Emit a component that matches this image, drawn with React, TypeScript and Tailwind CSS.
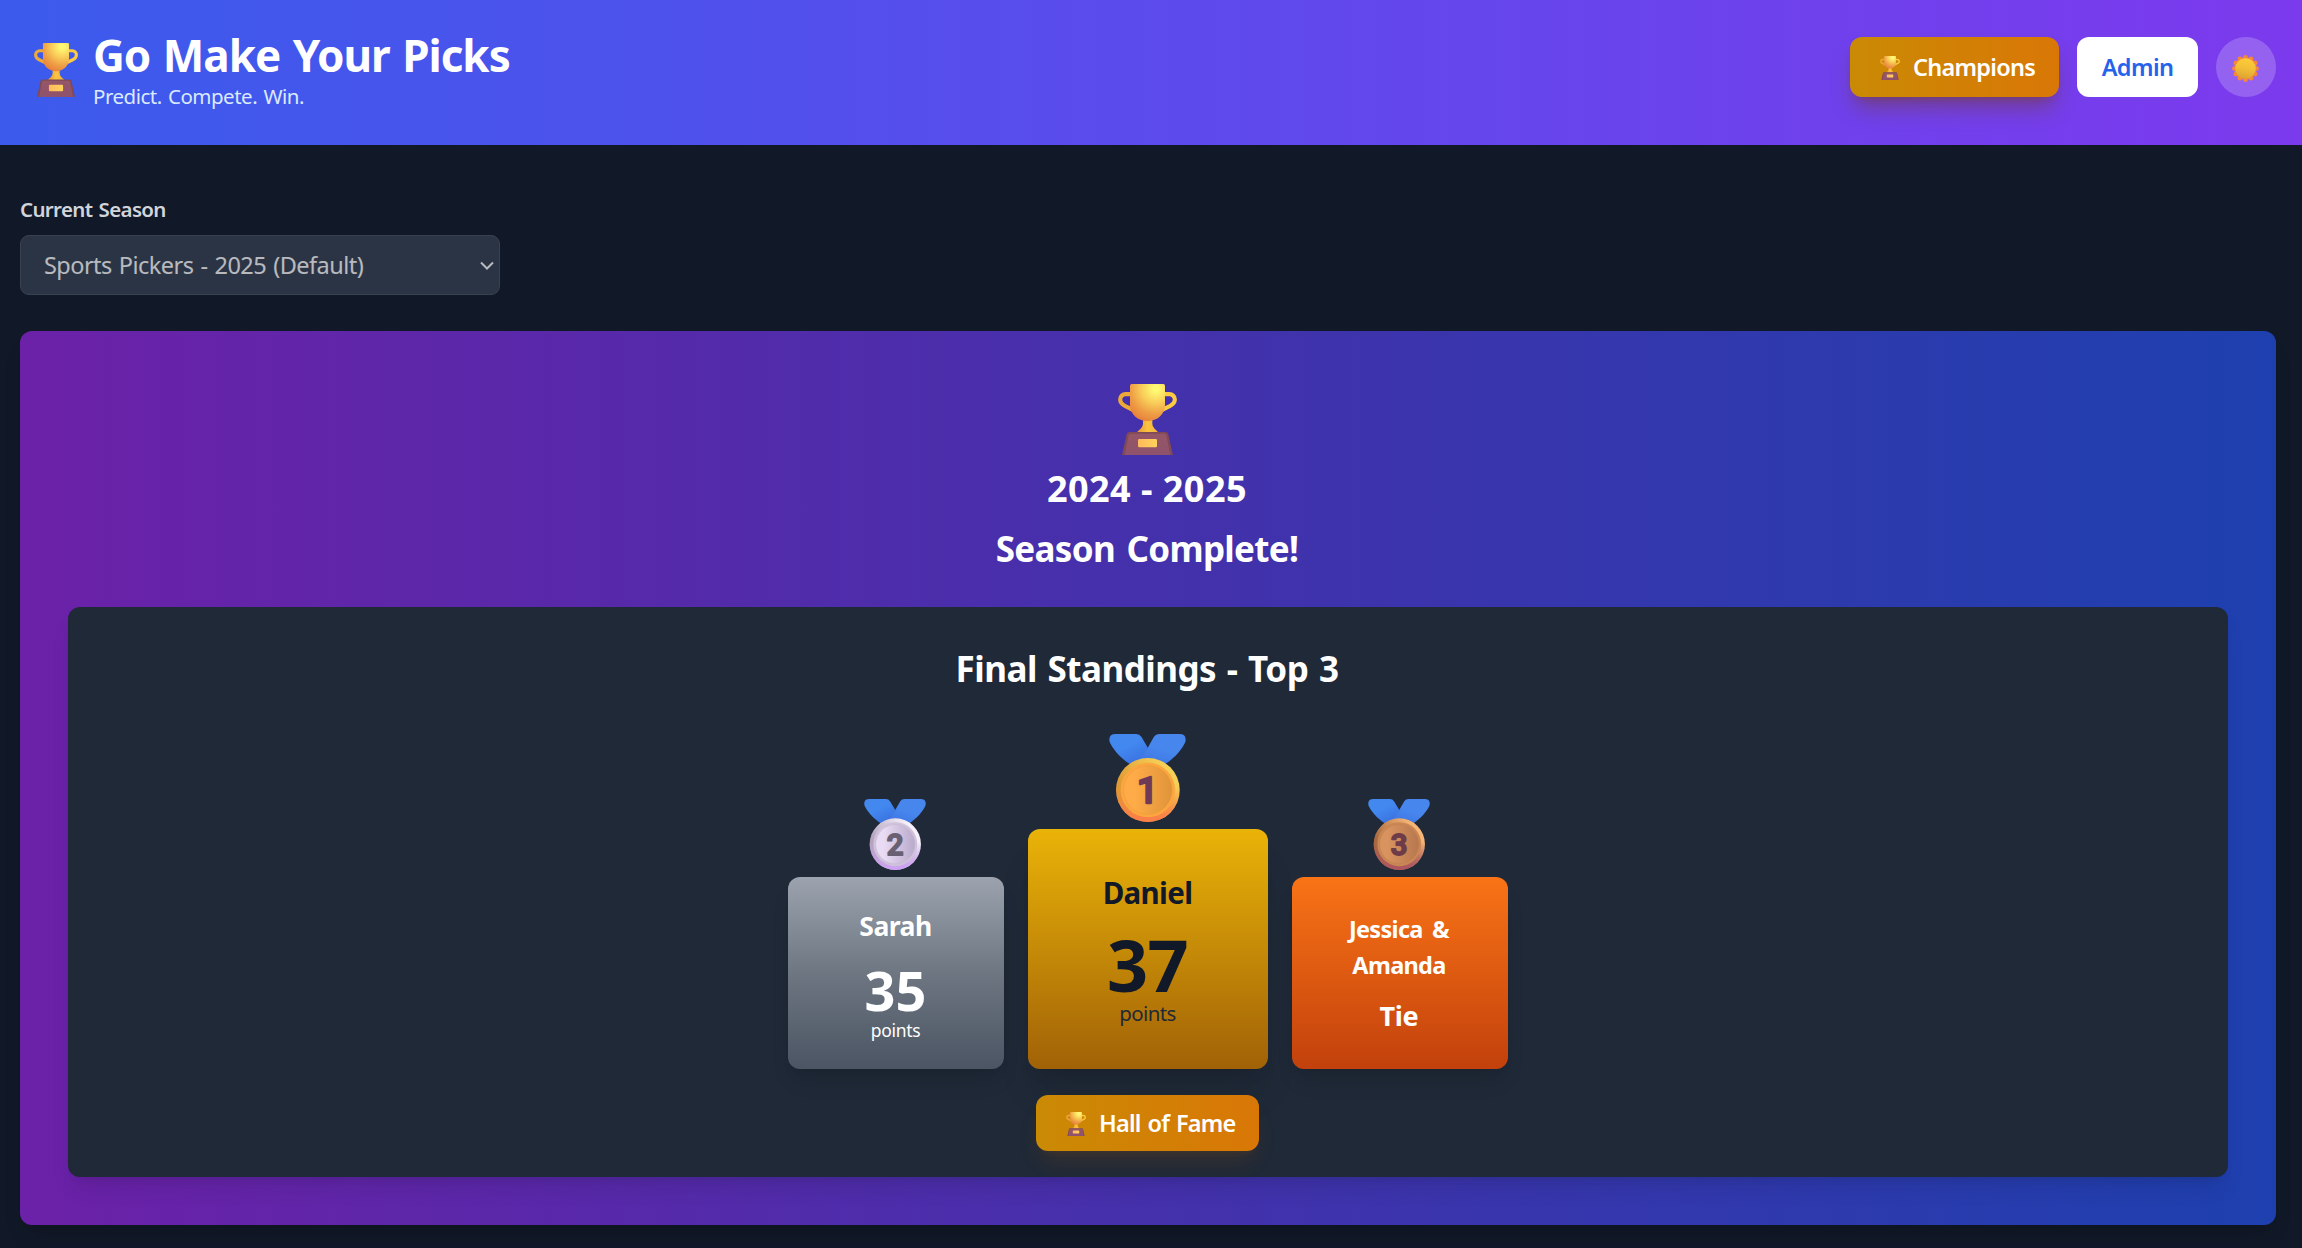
import React, { useId } from "react";

function Trophy({ className }: { className: string }) {
  const id = useId();
  return (
    <svg viewBox="0 0 177 213" preserveAspectRatio="none" className={className} aria-hidden="true">
      <defs>
        <radialGradient id={id + "cup"} gradientUnits="userSpaceOnUse" cx="114" cy="14" r="112">
          <stop offset="0.08" stopColor="#fff873" />
          <stop offset="0.4" stopColor="#f8cb58" />
          <stop offset="0.68" stopColor="#ee9e45" />
          <stop offset="0.9" stopColor="#e8843c" />
          <stop offset="1" stopColor="#dd7350" />
        </radialGradient>
        <linearGradient id={id + "stem"} x1="0" y1="0" x2="1" y2="0">
          <stop offset="0" stopColor="#e59334" />
          <stop offset="0.5" stopColor="#fbc440" />
          <stop offset="1" stopColor="#f0b03c" />
        </linearGradient>
        <linearGradient id={id + "plate"} x1="0" y1="0" x2="1" y2="0">
          <stop offset="0" stopColor="#ffb95c" />
          <stop offset="1" stopColor="#ffd35c" />
        </linearGradient>
        <linearGradient id={id + "base"} x1="0" y1="0" x2="0" y2="1">
          <stop offset="0" stopColor="#955667" />
          <stop offset="1" stopColor="#8f526c" />
        </linearGradient>
      </defs>
      <path d="M42 30.5H23A16 16 0 0 0 6.5 46C6.5 56 13 62 21 66L46 78" fill="none" stroke="#eda937" strokeWidth="12.5" />
      <path d="M135 30.5H154A16 16 0 0 1 170.5 46C170.5 56 164 62 156 66L131 78" fill="none" stroke="#fccb41" strokeWidth="12.5" />
      <path d="M75 106H103V118C103 130 112 136 122 146H55C66 136 75 130 75 118Z" fill={`url(#${id}stem)`} />
      <path d="M36 5Q36 0 41 0H136Q141 0 141 5V62C141 90 118 111 88.5 111C59 111 36 90 36 62Z" fill={`url(#${id}cup)`} />
      <path d="M35 144H142Q149 144 151 151L165 213H12L26 151Q28 144 35 144Z" fill="#7f4955" />
      <path d="M38 149H139Q143 149 145 154L157 213H20L32 154Q34 149 38 149Z" fill={`url(#${id}base)`} />
      <rect x="60" y="165" width="57" height="25" rx="4" fill={`url(#${id}plate)`} />
    </svg>
  );
}

type MedalTone = { rim: [string, string, string]; ring: string; face: [string, string]; digit: string };

const GOLD: MedalTone = { rim: ["#f6d056", "#dd9a35", "#fb7f48"], ring: "#fca640", face: ["#ffac48", "#e0943a"], digit: "#6f3a55" };
const SILVER: MedalTone = { rim: ["#f6f0fa", "#b3a3bb", "#cda2f2"], ring: "#cfc2da", face: ["#e8dbf3", "#b9aacb"], digit: "#696173" };
const BRONZE: MedalTone = { rim: ["#f8b676", "#a8693f", "#ae5660"], ring: "#c98853", face: ["#d8935f", "#b8774f"], digit: "#6e3b49" };

function Medal({ place, tone, className }: { place: string; tone: MedalTone; className: string }) {
  const id = useId();
  return (
    <svg viewBox="0 0 232 264" preserveAspectRatio="none" className={className} aria-hidden="true">
      <defs>
        <linearGradient id={id + "l"} x1="0.2" y1="0" x2="0.8" y2="1">
          <stop offset="0.4" stopColor="#4288ef" />
          <stop offset="1" stopColor="#3a6fdf" />
        </linearGradient>
        <linearGradient id={id + "r"} x1="0.7" y1="0" x2="0.2" y2="1">
          <stop offset="0.5" stopColor="#4686ed" />
          <stop offset="1" stopColor="#3f76e3" />
        </linearGradient>
        <linearGradient id={id + "rim"} x1="0.75" y1="0.1" x2="0.1" y2="0.5">
          <stop offset="0" stopColor={tone.rim[0]} />
          <stop offset="1" stopColor={tone.rim[1]} />
        </linearGradient>
        <linearGradient id={id + "low"} x1="0" y1="0" x2="0" y2="1">
          <stop offset="0.45" stopColor={tone.rim[2]} stopOpacity="0" />
          <stop offset="0.95" stopColor={tone.rim[2]} />
        </linearGradient>
        <linearGradient id={id + "face"} x1="0" y1="0" x2="1" y2="0">
          <stop offset="0.2" stopColor={tone.face[0]} />
          <stop offset="1" stopColor={tone.face[1]} />
        </linearGradient>
      </defs>
      <path d="M20 0H82Q92 0 98 9L117 41L98 92L66 92C32 72 10 42 2 24Q-3 0 20 0Z" fill={`url(#${id}l)`} />
      <path d="M212 0H152Q141 0 135 9L98 74L100 92L166 92C200 72 222 42 230 24Q235 0 212 0Z" fill={`url(#${id}r)`} />
      <circle cx="117" cy="168" r="96" fill={`url(#${id}rim)`} />
      <circle cx="117" cy="168" r="96" fill={`url(#${id}low)`} />
      <circle cx="117" cy="168" r="82" fill={tone.ring} />
      <circle cx="117" cy="168" r="73" fill={`url(#${id}face)`} stroke={tone.face[1]} strokeOpacity="0.5" strokeWidth="2" />
      <text
        x="116"
        y="208"
        textAnchor="middle"
        fill={tone.digit}
        stroke={tone.digit}
        strokeWidth="7"
        strokeLinejoin="round"
        className="font-['Roboto'] text-[110px] font-medium"
      >
        {place}
      </text>
    </svg>
  );
}

function Sun({ className }: { className: string }) {
  const rays = Array.from({ length: 12 }, (_, i) => {
    const a = (i * Math.PI) / 6 + Math.PI / 2;
    return { x: 40 + 33 * Math.cos(a), y: 40 + 33 * Math.sin(a) };
  });
  return (
    <svg viewBox="0 0 80 80" className={className} aria-hidden="true">
      <defs>
        <linearGradient id="sun-face" x1="0.6" y1="0" x2="0.4" y2="1">
          <stop offset="0" stopColor="#fecd38" />
          <stop offset="0.5" stopColor="#f2be37" />
          <stop offset="1" stopColor="#dca333" />
        </linearGradient>
      </defs>
      <circle cx="40" cy="40" r="33" fill="#ee8540" />
      {rays.map((r, i) => (
        <circle key={i} cx={r.x} cy={r.y} r="7" fill="#f4873c" />
      ))}
      <circle cx="40" cy="40" r="30.5" fill="url(#sun-face)" />
    </svg>
  );
}

function Header() {
  return (
    <header className="flex h-[145px] items-start justify-between bg-linear-to-r/srgb from-[#3b5bec] to-[#7c3aed] pl-[34px] pr-[26px]">
      <div className="flex">
        <Trophy className="mt-[43px] h-[54px] w-11" />
        <div className="ml-[15px] mt-[28px] whitespace-nowrap">
          <h1 className="text-[44px] font-bold leading-[54px] tracking-[-1px] text-white [word-spacing:2px]">Go Make Your Picks</h1>
          <p className="-mt-px text-[20.5px] leading-[30px] tracking-[-0.5px] text-[#dbeafe] [word-spacing:1.5px]">Predict. Compete. Win.</p>
        </div>
      </div>
      <div className="mt-[37px] flex gap-[18px] text-[23.5px] font-semibold">
        <button className="flex h-[60px] w-[209px] items-center rounded-xl bg-linear-to-r/srgb from-[#ca8a04] to-[#d97706] pl-[30px] text-white shadow-[0_15px_22px_-5px_rgba(113,63,18,0.45),0_6px_9px_-6px_rgba(113,63,18,0.45)]">
          <Trophy className="mt-[2px] h-6 w-5" />
          <span className="ml-[13px] pt-[2px] tracking-[-0.74px]">Champions</span>
        </button>
        <button className="h-[60px] w-[121px] rounded-xl bg-white pt-[2px] tracking-[-0.6px] text-[#2563eb]">Admin</button>
        <button className="flex size-[60px] items-center justify-center rounded-full bg-white/20">
          <Sun className="mr-[2px] mt-[2px] size-[27px]" />
        </button>
      </div>
    </header>
  );
}

function SeasonPicker() {
  return (
    <section className="w-[480px] whitespace-nowrap">
      <label className="block text-[20.5px] font-semibold leading-[30px] tracking-[-0.65px] text-[#d1d5db] [word-spacing:1.5px]">Current Season</label>
      <div className="mt-[11px] flex h-[60px] items-center justify-between rounded-[9px] border border-[#4b5563] bg-[#374151] pl-[23px] pr-[5px] text-white opacity-70">
        <span className="pt-[2px] text-[23.5px] tracking-[-0.54px] [word-spacing:1.5px]">Sports Pickers - 2025 (Default)</span>
        <svg viewBox="0 0 14 10" className="mt-px h-[10px] w-[14px]" fill="none" stroke="currentColor" strokeWidth="2">
          <path d="M1 1.5L7 7.5L13 1.5" />
        </svg>
      </div>
    </section>
  );
}

function Podium() {
  return (
    <div className="flex items-end justify-center gap-6 text-center">
      <div className="flex w-[216px] flex-col items-center">
        <Medal place="2" tone={SILVER} className="mr-[2px] h-[71px] w-[62px]" />
        <div className="mt-[7px] h-48 w-full rounded-xl bg-linear-to-b/srgb from-[#9ca3af] via-[#6d7681] to-[#4b5563] pr-px pt-[29px] text-white shadow-[0_15px_22px_-5px_rgba(0,0,0,0.1),0_6px_9px_-6px_rgba(0,0,0,0.1)]">
          <div className="text-[26.5px] font-bold leading-10 tracking-[-0.5px]">Sarah</div>
          <div className="mt-[17px] text-[54px] font-bold leading-[54px]">35</div>
          <div className="text-[17.5px] leading-[27px] tracking-[-0.3px]">points</div>
        </div>
      </div>
      <div className="flex w-60 flex-col items-center">
        <Medal place="1" tone={GOLD} className="mr-[2px] h-[88px] w-[77px]" />
        <div className="mt-[7px] h-60 w-full rounded-xl bg-linear-to-b/srgb from-[#eab308] to-[#a16207] pr-px pt-[41px] text-[#111827] shadow-[0_30px_38px_-8px_rgba(0,0,0,0.1),0_12px_15px_-9px_rgba(0,0,0,0.1)]">
          <div className="text-[29.5px] font-bold leading-[45px] tracking-[-0.66px]">Daniel</div>
          <div className="mt-[14px] text-[72px] font-bold leading-[70px] tracking-[-0.6px]">37</div>
          <div className="text-[20.5px] leading-[28px] tracking-[-0.58px] text-[#1f2937]">points</div>
        </div>
      </div>
      <div className="flex w-[216px] flex-col items-center">
        <Medal place="3" tone={BRONZE} className="mr-[2px] h-[71px] w-[62px]" />
        <div className="mt-[7px] h-48 w-full rounded-xl bg-linear-to-b/srgb from-[#f97316] to-[#c2410c] pr-[2px] pt-[34px] font-bold text-white shadow-[0_15px_22px_-5px_rgba(0,0,0,0.1),0_6px_9px_-6px_rgba(0,0,0,0.1)]">
          <div className="mx-auto w-[140px] text-[23.5px] leading-9 tracking-[-0.7px] [word-spacing:4px]">Jessica &amp; Amanda</div>
          <div className="mt-[13px] text-[27px] leading-10 tracking-[-0.33px]">Tie</div>
        </div>
      </div>
    </div>
  );
}

export default function App() {
  return (
    <div className="h-[1248px] overflow-hidden bg-[#111827] font-['Noto_Sans','Open_Sans',sans-serif]">
      <Header />
      <main className="pl-5 pr-[26px] pt-[49px]">
        <SeasonPicker />
        <section className="mt-9 flex h-[894px] flex-col items-center rounded-xl bg-linear-to-r/srgb from-[#6b21a8] to-[#1e40af] px-12 pt-[53px] shadow-[0_15px_22px_-5px_rgba(0,0,0,0.1),0_6px_9px_-6px_rgba(0,0,0,0.1)]">
          <Trophy className="mr-[2px] h-[71px] w-[59px]" />
          <h2 className="mr-[2px] mt-[7px] text-4xl font-bold leading-[54px] tracking-[0.46px] text-white">2024 - 2025</h2>
          <h2 className="mr-[2px] mt-[6px] text-[35px] font-bold leading-[54px] tracking-[-0.67px] text-white [word-spacing:3px]">Season Complete!</h2>
          <div className="mt-[31px] flex h-[570px] w-full flex-col items-center rounded-xl bg-[#1f2937] pt-[35px] shadow-[0_15px_22px_-5px_rgba(0,0,0,0.1),0_6px_9px_-6px_rgba(0,0,0,0.1)]">
            <h3 className="mb-[38px] mr-[2px] text-[35px] font-bold leading-[54px] tracking-[-0.5px] text-white [word-spacing:2px]">Final Standings - Top 3</h3>
            <Podium />
            <button className="mr-[1px] mt-[26px] flex h-14 w-[223px] items-center rounded-xl bg-linear-to-r/srgb from-[#ca8a04] to-[#d97706] pl-[30px] text-[23.5px] font-semibold text-white shadow-[0_15px_22px_-5px_rgba(202,100,4,0.14),0_6px_9px_-6px_rgba(202,100,4,0.14)]">
              <Trophy className="mt-[2px] h-6 w-5" />
              <span className="ml-[13px] whitespace-nowrap pt-[2px] tracking-[-0.79px] [word-spacing:1.5px]">Hall of Fame</span>
            </button>
          </div>
        </section>
      </main>
    </div>
  );
}
